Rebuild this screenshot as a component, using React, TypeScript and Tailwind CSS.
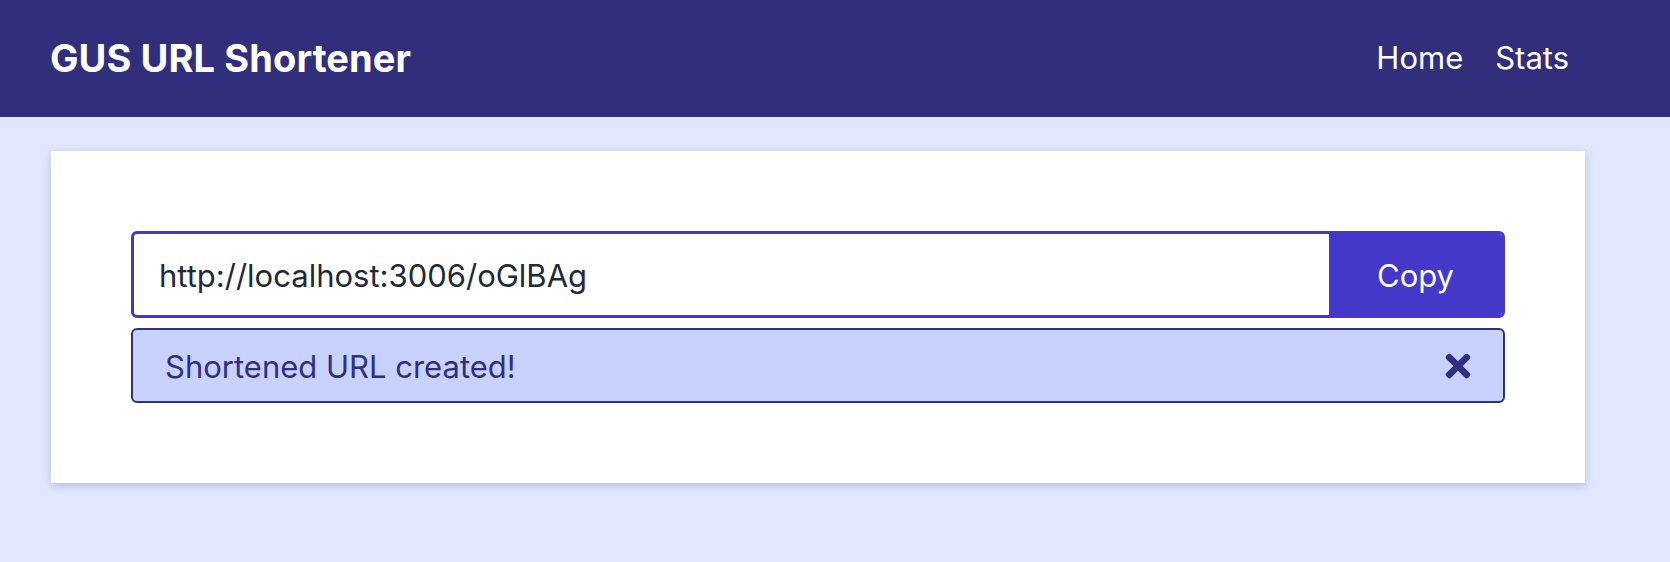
import React from "react";
import { FaTimes } from "react-icons/fa";

export default function App() {
  return (
    <div
      className="min-h-[562px] bg-[#e0e7ff]"
      style={{ fontFamily: "Inter, 'Noto Sans', sans-serif" }}
    >
      <header className="h-[117px] bg-[#312e7c] flex items-center justify-between pl-[50px] pr-[101px]">
        <h1 className="text-[38px] font-bold text-white tracking-[0.1px]">GUS URL Shortener</h1>
        <nav className="flex items-center gap-[32px] text-[31px] text-white">
          <a>Home</a>
          <a>Stats</a>
        </nav>
      </header>
      <main className="pt-[34px] pl-[51px] pr-[85px]">
        <div className="bg-white shadow-[0_3px_8px_rgba(60,70,120,0.25)] p-20">
          <div className="flex h-[87px] border-[3px] border-[#4338ca] rounded-[6px] overflow-hidden">
            <div className="flex-1 flex items-center pl-[25px] pt-[4px] text-[31px] text-[#1f2937]">
              http://localhost:3006/oGlBAg
            </div>
            <button className="w-[173px] pt-[4px] bg-[#4338ca] text-white text-[31px]">Copy</button>
          </div>
          <div className="mt-[10px] h-[75px] flex items-center justify-between bg-[#c7d2fe] border-2 border-[#312e81] rounded-[6px] pl-[32px] pr-[32px] text-[#312e81] text-[31px]">
            <span className="pt-[4px]">Shortened URL created!</span>
            <FaTimes className="w-[26px] h-[36px]" />
          </div>
        </div>
      </main>
    </div>
  );
}
